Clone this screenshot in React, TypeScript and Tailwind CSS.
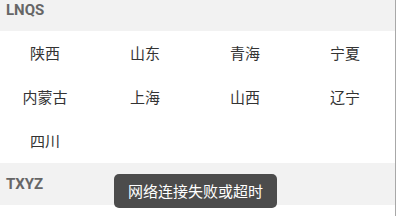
import React from "react";

const sections = [
  { title: "LNQS", items: ["陕西", "山东", "青海", "宁夏", "内蒙古", "上海", "山西", "辽宁", "四川"] },
  { title: "TXYZ", items: [] as string[] },
];

export default function App() {
  return (
    <div
      className="relative w-[397px] h-[216px] overflow-hidden bg-white flex"
      style={{ fontFamily: 'Roboto, "Noto Sans CJK SC", sans-serif' }}
    >
      <div className="flex-1 flex flex-col">
        <div className="-mt-[11px]">
          {sections.map((s) => (
            <div key={s.title}>
              <div className="h-[42px] bg-[#f2f2f2] flex items-center pl-[6px] text-[15px] font-bold text-[#666666]">
                {s.title}
              </div>
              {s.items.length > 0 && (
                <div className="grid grid-cols-[90px_90px_90px_90px] gap-x-[10px]">
                  {s.items.map((it) => (
                    <div key={it} className="h-[44px] pt-[2px] flex items-center justify-center text-[15px] text-[#333333]">
                      {it}
                    </div>
                  ))}
                </div>
              )}
            </div>
          ))}
        </div>
      </div>
      <div className="w-px bg-[#a8a8a8] mr-px" />
      <div className="absolute left-[114px] top-[174px] w-[163px] h-[34px] pt-[2px] rounded-[5px] bg-[#4c4c4c] text-white text-[15px] flex items-center justify-center">
        网络连接失败或超时
      </div>
    </div>
  );
}
